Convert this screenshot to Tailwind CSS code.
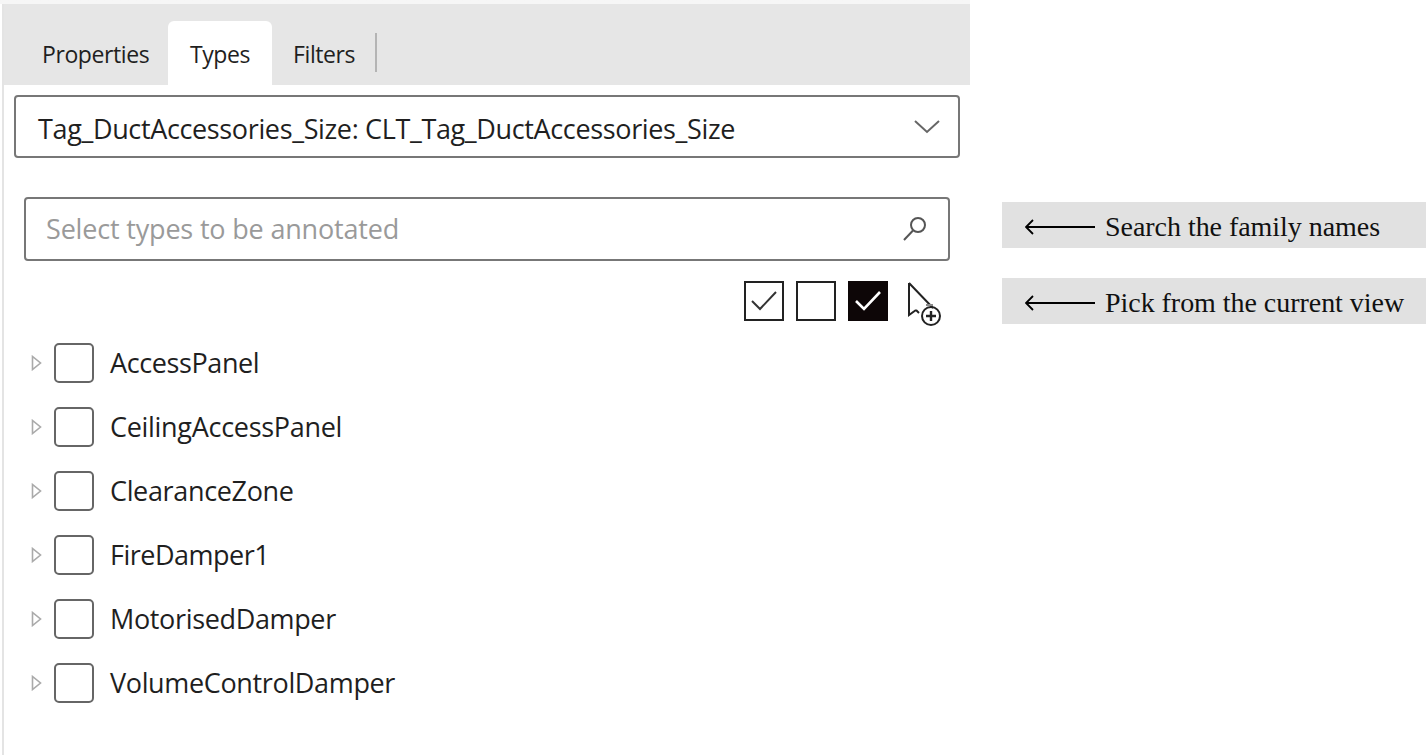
<!DOCTYPE html>
<html lang="en">
<head>
  <meta charset="UTF-8" />
  <title>Types panel</title>
  <script src="https://cdn.jsdelivr.net/npm/@tailwindcss/browser@4"></script>
</head>
<body class="bg-white text-[#1f1f1f] font-['Open_Sans',sans-serif] overflow-hidden">
<div class="flex h-[755px]">

  <!-- Panel -->
  <div class="w-[970px] h-full pt-[4px] shrink-0 bg-gradient-to-b from-[#f6f6f6] from-[4px] to-white to-[4px]">
    <div class="h-full ml-[2px] border-l-2 border-[#e4e4e4] bg-white">
      <!-- Tabs -->
      <div class="h-[81px] bg-[#e6e6e6] flex items-end pl-[18px]">
        <div class="h-[64px] w-[146px] flex items-center pl-[20px] text-[23px] tracking-[-0.4px] pt-[3px]">Properties</div>
        <div class="h-[64px] w-[104px] flex items-center justify-center bg-white rounded-t-[6px] text-[23px] tracking-[-0.4px] pt-[3px]">Types</div>
        <div class="h-[64px] w-[103px] flex items-center pl-[21px] text-[23px] tracking-[-0.4px] pt-[3px]">Filters</div>
        <div class="w-[2px] h-[39px] bg-[#b4b4b4] mb-[13px]"></div>
      </div>

      <!-- Dropdown -->
      <div class="mt-[10px] ml-[10px] w-[946px] h-[63px] border-2 border-[#777] rounded-[4px] flex items-center justify-between pl-[22px] pr-[17px]">
        <span class="text-[27px] tracking-[-0.36px] pt-[5px]">Tag_DuctAccessories_Size: CLT_Tag_DuctAccessories_Size</span>
        <svg width="28" height="16" viewBox="0 0 28 16" fill="none" stroke="#666" stroke-width="2"><path d="M2 2l12 11L26 2"/></svg>
      </div>

      <!-- Search -->
      <div class="mt-[39px] ml-[20px] w-[926px] h-[64px] border-2 border-[#777] rounded-[4px] flex items-center justify-between pl-[20px] pr-[19px]">
        <span class="text-[27px] tracking-[-0.18px] text-[#9a9a9a]">Select types to be annotated</span>
        <svg width="28" height="28" viewBox="0 0 28 28" fill="none" stroke="#555" stroke-width="2"><circle cx="17" cy="10" r="7"/><path d="M12 15.5L3 25"/></svg>
      </div>

      <!-- Toolbar -->
      <div class="mt-[20px] h-[48px] flex items-start justify-end pr-[26px]">
        <div class="w-[40px] h-[40px] border-2 border-[#222] flex items-center justify-center">
          <svg width="28" height="24" viewBox="0 0 28 24" fill="none" stroke="#333" stroke-width="2"><path d="M2 12l8 8L26 3"/></svg>
        </div>
        <div class="w-[40px] h-[40px] border-2 border-[#222] ml-[12px]"></div>
        <div class="w-[40px] h-[40px] bg-[#0d0607] ml-[12px] flex items-center justify-center">
          <svg width="28" height="24" viewBox="0 0 28 24" fill="none" stroke="#fff" stroke-width="2.6"><path d="M2 12l8 8L26 3"/></svg>
        </div>
        <svg class="ml-[18px]" width="38" height="48" viewBox="0 0 38 48" fill="none" stroke="#222" stroke-width="2"><path d="M3 2v32l7-5M3 2l24 25"/><path d="M10 29l3 3" /><path d="M20 24h7" stroke="#888"/><circle cx="25" cy="35" r="9"/><path d="M25 30v10M20 35h10" stroke-width="2.4"/></svg>
      </div>

      <!-- Tree -->
      <div class="mt-[2px] flex flex-col">
        <div class="h-[64px] flex items-center pl-[27px]">
          <svg width="11" height="16" viewBox="0 0 11 16" fill="none" stroke="#aaa" stroke-width="1.6"><path d="M1.5 1.5v13L9.5 8z"/></svg>
          <div class="w-[40px] h-[40px] ml-[12px] border-2 border-[#666] rounded-[5px]"></div>
          <span class="ml-[16px] text-[27px] tracking-[-0.4px]">AccessPanel</span>
        </div>
        <div class="h-[64px] flex items-center pl-[27px]">
          <svg width="11" height="16" viewBox="0 0 11 16" fill="none" stroke="#aaa" stroke-width="1.6"><path d="M1.5 1.5v13L9.5 8z"/></svg>
          <div class="w-[40px] h-[40px] ml-[12px] border-2 border-[#666] rounded-[5px]"></div>
          <span class="ml-[16px] text-[27px] tracking-[-0.3px]">CeilingAccessPanel</span>
        </div>
        <div class="h-[64px] flex items-center pl-[27px]">
          <svg width="11" height="16" viewBox="0 0 11 16" fill="none" stroke="#aaa" stroke-width="1.6"><path d="M1.5 1.5v13L9.5 8z"/></svg>
          <div class="w-[40px] h-[40px] ml-[12px] border-2 border-[#666] rounded-[5px]"></div>
          <span class="ml-[16px] text-[27px] tracking-[-0.35px]">ClearanceZone</span>
        </div>
        <div class="h-[64px] flex items-center pl-[27px]">
          <svg width="11" height="16" viewBox="0 0 11 16" fill="none" stroke="#aaa" stroke-width="1.6"><path d="M1.5 1.5v13L9.5 8z"/></svg>
          <div class="w-[40px] h-[40px] ml-[12px] border-2 border-[#666] rounded-[5px]"></div>
          <span class="ml-[16px] text-[27px] tracking-[-0.5px]">FireDamper1</span>
        </div>
        <div class="h-[64px] flex items-center pl-[27px]">
          <svg width="11" height="16" viewBox="0 0 11 16" fill="none" stroke="#aaa" stroke-width="1.6"><path d="M1.5 1.5v13L9.5 8z"/></svg>
          <div class="w-[40px] h-[40px] ml-[12px] border-2 border-[#666] rounded-[5px]"></div>
          <span class="ml-[16px] text-[27px] tracking-[-0.35px]">MotorisedDamper</span>
        </div>
        <div class="h-[64px] flex items-center pl-[27px]">
          <svg width="11" height="16" viewBox="0 0 11 16" fill="none" stroke="#aaa" stroke-width="1.6"><path d="M1.5 1.5v13L9.5 8z"/></svg>
          <div class="w-[40px] h-[40px] ml-[12px] border-2 border-[#666] rounded-[5px]"></div>
          <span class="ml-[16px] text-[27px] tracking-[-0.35px]">VolumeControlDamper</span>
        </div>
      </div>
    </div>
  </div>

  <!-- Annotations -->
  <div class="ml-[32px] w-[424px] pt-[202px] font-['Liberation_Serif',serif] text-[28px] text-[#111]">
    <div class="h-[46px] bg-[#e1e1e1] flex items-center pl-[23px] pt-[4px]">
      <svg width="70" height="16" viewBox="0 0 70 16" fill="none" stroke="#000" stroke-width="1.8"><path d="M1 8h69M8 1L1 8l7 7"/></svg>
      <span class="ml-[10px] tracking-[-0.04px]">Search the family names</span>
    </div>
    <div class="mt-[30px] h-[46px] bg-[#e1e1e1] flex items-center pl-[23px] pt-[4px]">
      <svg width="70" height="16" viewBox="0 0 70 16" fill="none" stroke="#000" stroke-width="1.8"><path d="M1 8h69M8 1L1 8l7 7"/></svg>
      <span class="ml-[10px] tracking-[-0.04px]">Pick from the current view</span>
    </div>
  </div>
</div>
</body>
</html>
